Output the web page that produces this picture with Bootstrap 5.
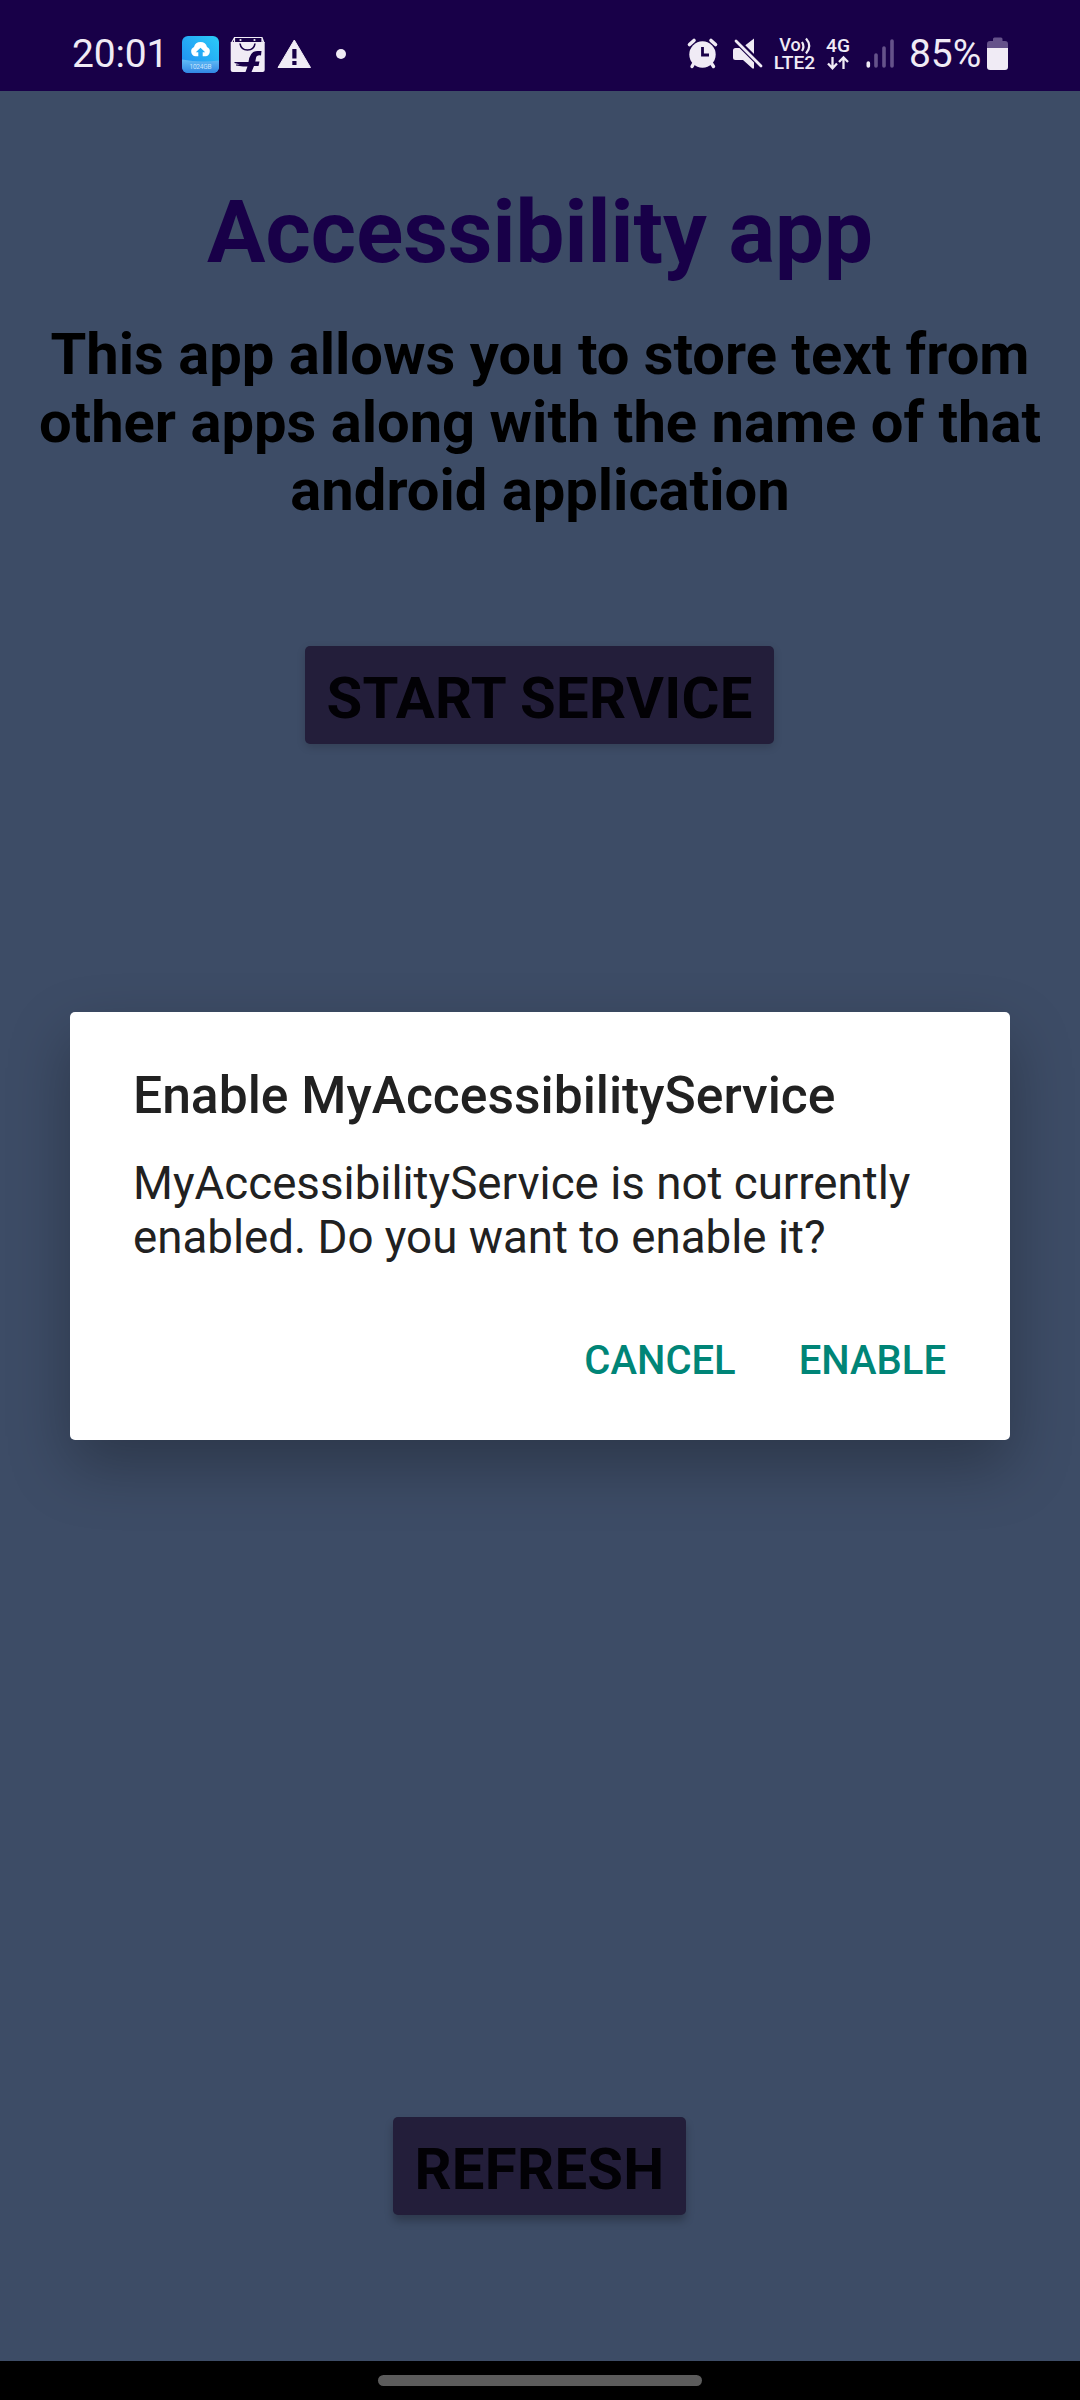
<!DOCTYPE html>
<html lang="en">
<head>
<meta charset="utf-8">
<meta name="viewport" content="width=device-width, initial-scale=1">
<title>Accessibility app</title>
<link rel="stylesheet" href="https://cdn.jsdelivr.net/npm/bootstrap@5.3.0/dist/css/bootstrap.min.css">
<style>
  body { font-family: Roboto, "Liberation Sans", sans-serif; background: #3d4c66; }
  .phone { height: 2400px; }
  .statusbar { height: 91px; background: #180048; color: #f0ebf5; padding-left: 72px; padding-right: 71px; }
  .statusbar svg { height: 91px; display: block; flex: none; }
  .clock, .charge { font-size: 39px; line-height: 46px; padding-top: 31px; white-space: nowrap; }
  .clock { width: 104px; letter-spacing: -.2px; }
  .charge { width: 75px; letter-spacing: -.1px; }
  .app-title { font-size: 87px; line-height: 102px; color: #180048; margin-top: 90px; }
  .app-text { font-size: 57.900px; line-height: 68px; color: #000; margin-top: 37px; }
  .app-btn { background: #231e3a; color: #020105; font-size: 58px; line-height: 68px; font-weight: 700; height: 98px; padding: 18px 0 12px; border: 0; border-radius: 5px; letter-spacing: .3px; margin-right: 1px; }
  .btn-start { width: 469px; margin-top: 122px; box-shadow: 0 3px 8px rgba(0,0,0,.16); }
  .btn-refresh { width: 293px; margin-bottom: 146px; box-shadow: 0 6px 9px rgba(0,0,0,.24); }
  .navstrip { height: 39px; background: #000; }
  .navpill { width: 324px; height: 11px; background: #5c5c5c; }
  .dialog-layer { padding: 1012px 70px 0; }
  .dialog-box { height: 428px; border: 0; border-radius: 5px; color: #212121; padding: 53px 64px 0 63px; box-shadow: 0 26px 62px rgba(0,0,0,.28); }
  .dialog-title { font-size: 51.600px; line-height: 62px; font-weight: 500; }
  .dialog-text { font-size: 45.700px; line-height: 54px; margin-top: 30px; }
  .dialog-actions { gap: 63px; margin-top: 72px; }
  .dialog-btn { font-size: 40px; line-height: 48px; font-weight: 500; color: #008577; padding: 0; border: 0; }
</style>
</head>
<body>
<div class="phone position-relative d-flex flex-column overflow-hidden">
  <header class="statusbar d-flex justify-content-between">
    <div class="d-flex">
      <div class="clock">20:01</div>
      <svg width="48" viewBox="176 0 48 91">
        <defs>
          <linearGradient id="sky" x1="0" y1="1" x2="1" y2="0"><stop offset="0" stop-color="#1f86f2"/><stop offset="1" stop-color="#2bcdf8"/></linearGradient>
          <linearGradient id="wave" x1="0" y1="0" x2="0" y2="1"><stop offset="0" stop-color="#62bdf6"/><stop offset="1" stop-color="#3186e4"/></linearGradient>
          <clipPath id="tile"><rect x="182" y="36" width="37" height="37" rx="6"/></clipPath>
        </defs>
        <g clip-path="url(#tile)">
          <rect x="182" y="36" width="37" height="37" fill="url(#sky)"/>
          <path d="M182 59.500Q200 63 219 60.500V73H182Z" fill="url(#wave)"/>
        </g>
        <path d="M198.300 56.300H195.500A4.900 4.900 0 0 1 194 47A6.700 6.700 0 0 1 207 47A4.900 4.900 0 0 1 205.500 56.300H202.700V52.300H205.200L200.500 47.700L195.800 52.300H198.300Z" fill="#fff"/>
        <text x="189.500" y="69" font-size="6.500" textLength="22" fill="#c9e6fd">1024GB</text>
      </svg>
      <svg width="46" viewBox="224 0 46 91">
        <path d="M231 42H264.700V70Q264.700 72 262.700 72H232.700Q230.700 72 230.700 70V42.500Z" fill="#f0ebf5"/>
        <path d="M231.500 43L234.500 37.500H262L264 43M262 37.500V42M234.500 37.500V42" fill="none" stroke="#f0ebf5" stroke-width="1.200"/>
        <circle cx="240.500" cy="40" r="1.100" fill="#f0ebf5"/><circle cx="254.500" cy="40" r="1.100" fill="#f0ebf5"/>
        <path d="M240 43.500Q241 50 247.500 50Q254 50 255 43.500" fill="none" stroke="#180048" stroke-width="1.600"/>
        <path d="M245.500 72L247.500 66.500H243L236 65.500V64.500H240L234.500 63V62H248.500Q250 51 257.500 51H261.500L261 55.500Q256.500 54.800 256 58L255.300 61.500H259.500L258.500 66H254L251.500 72Z" fill="#180048"/>
      </svg>
      <svg width="46" viewBox="270 0 46 91">
        <path d="M294.300 40L310.500 67.500H278Z" fill="#f0ebf5" stroke="#f0ebf5" stroke-linejoin="round"/>
        <path d="M292.300 49H296.500V58.500H292.300ZM292.300 61H296.500V65H292.300Z" fill="#180048"/>
      </svg>
      <svg width="40" viewBox="316 0 40 91"><circle cx="341" cy="54" r="5" fill="#f0ebf5"/></svg>
    </div>
    <div class="d-flex">
      <svg width="45" viewBox="680 0 45 91" fill="#f0ebf5" stroke="#f0ebf5">
        <circle cx="702.500" cy="54.500" r="13.200" stroke="none"/>
        <path d="M689.500 44.500L694 40.500M715.500 44.500L711 40.500" stroke-width="3.600" stroke-linecap="round"/>
        <path d="M694.500 62L692 66.500M710.500 62L713.500 66.500" stroke-width="3.400" stroke-linecap="round"/>
        <path d="M702.500 47V55H709" stroke="#180048" stroke-width="2.800" fill="none"/>
      </svg>
      <svg width="45" viewBox="725 0 45 91" fill="#f0ebf5">
        <path d="M745 45.500L754 38.500V54.500ZM735.500 48H739.500L754 62.500V68.500H752.500L743 60H735.500Q733 60 733 57.500V50.500Q733 48 735.500 48Z"/>
        <path d="M736 41L761 66" stroke="#180048" stroke-width="2" transform="translate(1.800 -1.800)"/>
        <path d="M736 41L761 66" stroke="#f0ebf5" stroke-width="2.800" stroke-linecap="round"/>
      </svg>
      <svg width="50" viewBox="770 0 50 91" fill="#f0ebf5" font-weight="500">
        <text x="779.300" y="51" font-size="17.800" textLength="21.500" lengthAdjust="spacingAndGlyphs">Vo</text>
        <path d="M802 42Q804.800 46.500 802 51M806 38.500Q812.500 46 806 53.500" fill="none" stroke="#f0ebf5" stroke-width="2.200"/>
        <text x="773.800" y="69" font-size="17.800" textLength="41.500" lengthAdjust="spacingAndGlyphs">LTE2</text>
      </svg>
      <svg width="40" viewBox="820 0 40 91" fill="#f0ebf5">
        <text x="826" y="52" font-size="18.500" font-weight="500" textLength="24" lengthAdjust="spacingAndGlyphs">4G</text>
        <path d="M832.500 57V68M828 63.500L832.500 68.300L837 63.500M843.500 69V58M839 62L843.500 57.300L848 62" fill="none" stroke="#f0ebf5" stroke-width="2.300"/>
      </svg>
      <svg width="49" viewBox="860 0 49 91" stroke="#65528a" stroke-width="3.600" stroke-linecap="round">
        <path d="M868.300 63V66" stroke="#f0ebf5"/><path d="M876 55V66M884 48V66M892 41V66"/>
      </svg>
      <div class="charge">85%</div>
      <svg width="25" viewBox="984 0 25 91">
        <path d="M993 41V39Q993 37.500 994.500 37.500H1001Q1002.500 37.500 1002.500 39V41H1005Q1008 41 1008 44V49H987V44Q987 41 990 41Z" fill="#65528a"/>
        <path d="M987 48H1008V67Q1008 70 1005 70H990Q987 70 987 67Z" fill="#f0ebf5"/>
      </svg>
    </div>
  </header>

  <main class="flex-grow-1 d-flex flex-column align-items-center text-center">
    <h1 class="app-title fw-bold mb-0">Accessibility app</h1>
    <p class="app-text fw-bold mb-0">This app allows you to store text from<br>other apps along with the name of that<br>android application</p>
    <button type="button" class="btn app-btn btn-start">START SERVICE</button>
    <button type="button" class="btn app-btn btn-refresh mt-auto">REFRESH</button>
  </main>

  <footer class="navstrip d-flex justify-content-center align-items-center">
    <div class="navpill rounded-pill"></div>
  </footer>

  <div class="dialog-layer position-absolute top-0 start-0 w-100">
    <div class="dialog-box modal-content bg-white" role="dialog" aria-labelledby="dlgTitle">
      <h2 class="dialog-title mb-0" id="dlgTitle">Enable MyAccessibilityService</h2>
      <p class="dialog-text mb-0">MyAccessibilityService is not currently<br>enabled. Do you want to enable it?</p>
      <div class="dialog-actions d-flex justify-content-end">
        <button type="button" class="btn dialog-btn">CANCEL</button>
        <button type="button" class="btn dialog-btn">ENABLE</button>
      </div>
    </div>
  </div>
</div>
<script src="https://cdn.jsdelivr.net/npm/bootstrap@5.3.0/dist/js/bootstrap.bundle.min.js"></script>
</body>
</html>
